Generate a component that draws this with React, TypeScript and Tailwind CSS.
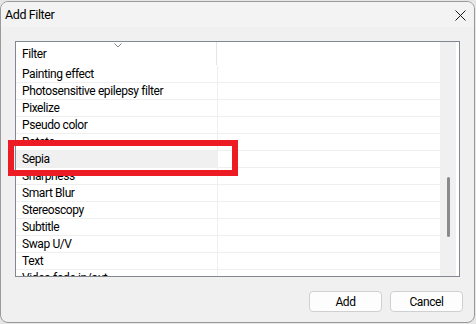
import React from "react";

const rows = [
  "Painting effect",
  "Photosensitive epilepsy filter",
  "Pixelize",
  "Pseudo color",
  "Rotate",
  "Sepia",
  "Sharpness",
  "Smart Blur",
  "Stereoscopy",
  "Subtitle",
  "Swap U/V",
  "Text",
  "Video fade in/out",
];

export default function App() {
  return (
    <div
      className="w-[476px] h-[324px] bg-[#e6e6e6] overflow-hidden relative tracking-[-0.4px]"
      style={{ fontFamily: 'Roboto, "Noto Sans", sans-serif' }}
    >
      <div className="w-[475px] h-[322px] mt-[1px] rounded-[8px] border border-[#9a9a9a] bg-[#f0f0f0] flex flex-col overflow-hidden">
        {/* title bar */}
        <div className="h-[25px] shrink-0 bg-[#f3f3f3] flex items-center justify-between pl-[4px] pr-[8px]">
          <span className="text-[12.5px] text-black leading-none mt-[1px]">Add Filter</span>
          <svg width="11" height="11" viewBox="0 0 11 11" className="mt-[2px]">
            <path d="M0.5 0.5 L10.5 10.5 M10.5 0.5 L0.5 10.5" stroke="#1a1a1a" strokeWidth="1" />
          </svg>
        </div>
        {/* body */}
        <div className="flex-1 flex flex-col pl-[14px] pr-[15px] pt-[14px]">
          <div className="h-[236px] w-[445px] border border-[#828790] bg-white flex">
            <div className="w-[424px] flex flex-col overflow-hidden">
              {/* header */}
              <div className="h-[24px] shrink-0 flex">
                <div className="w-[200px] relative flex items-center pl-[6px] text-[12px] text-black">
                  Filter
                  <svg width="8" height="5" viewBox="0 0 8 5" className="absolute left-[98px] top-[1px]">
                    <path d="M0.5 0.5 L4 4 L7.5 0.5" stroke="#8a8a8a" strokeWidth="1" fill="none" />
                  </svg>
                </div>
                <div className="w-[1px] h-[23px] bg-[#e5e5e5]" />
                <div className="flex-1" />
              </div>
              {rows.map((r) => (
                <div key={r} className="h-[17px] shrink-0 flex border-b border-[#efefef]">
                  <div
                    className={`w-[201px] flex items-center pl-[6px] text-[12px] text-black whitespace-nowrap ${
                      r === "Sepia" ? "bg-[#f0f0f0]" : ""
                    }`}
                  >
                    {r}
                  </div>
                  <div className="w-[1px] bg-[#efefef]" />
                  <div className="flex-1" />
                </div>
              ))}
            </div>
            <div className="w-[16px] bg-[#f0f0f0] pt-[135px] pl-[7px]">
              <div className="w-[3px] h-[60px] rounded-full bg-[#8a8a8a]" />
            </div>
          </div>
          <div className="flex justify-end gap-[8px] mt-[14px] mr-[-4px]">
            <button className="w-[73px] h-[21px] rounded-[4px] border border-[#d0d0d0] bg-[#fdfdfd] text-[12px] text-black leading-none">
              Add
            </button>
            <button className="w-[73px] h-[21px] rounded-[4px] border border-[#d0d0d0] bg-[#fdfdfd] text-[12px] text-black leading-none">
              Cancel
            </button>
          </div>
        </div>
      </div>
      {/* red annotation box */}
      <div className="absolute left-[8px] top-[140px] w-[230px] h-[36px] border-[6px] border-[#ed1c24]" />
    </div>
  );
}
